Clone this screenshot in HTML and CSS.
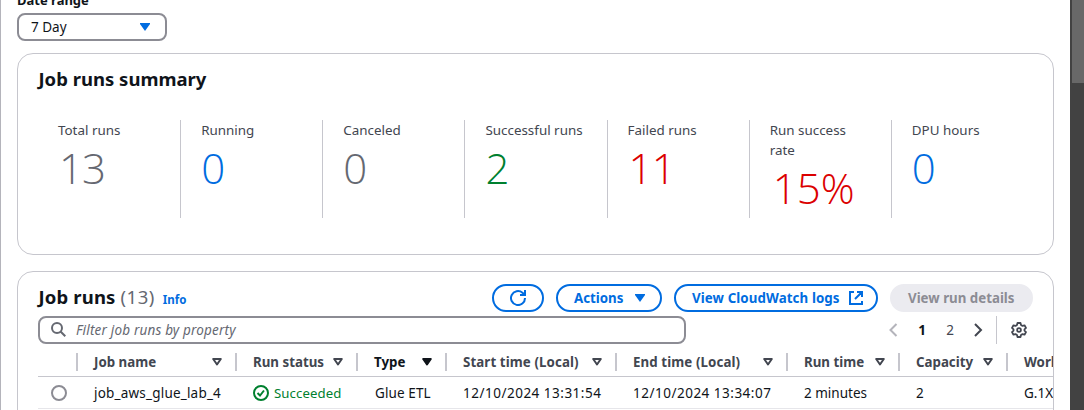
FILE: index.html
```html
<!DOCTYPE html>
<html lang="en">
<head>
<meta charset="utf-8">
<title>Job runs</title>
<link rel="stylesheet" href="styles.css">
</head>
<body>
<div class="app">
  <main class="content">
    <div class="field-label"><span>Date range</span></div>
    <div class="select"><span>7 Day</span><svg width="10" height="8" viewBox="0 0 10 8"><path d="M0 0h10v1L5 8 0 1z" fill="currentColor"/></svg></div>

    <section class="card summary">
      <h2 class="title title-summary">Job runs summary</h2>
      <div class="stats">
        <div class="stat"><div class="stat-label">Total runs</div><div class="stat-value grey multi">13</div></div>
        <div class="stat"><div class="stat-label">Running</div><div class="stat-value blue">0</div></div>
        <div class="stat"><div class="stat-label">Canceled</div><div class="stat-value grey">0</div></div>
        <div class="stat"><div class="stat-label">Successful runs</div><div class="stat-value green">2</div></div>
        <div class="stat"><div class="stat-label">Failed runs</div><div class="stat-value red multi">11</div></div>
        <div class="stat"><div class="stat-label">Run success rate</div><div class="stat-value red percent">15%</div></div>
        <div class="stat"><div class="stat-label">DPU hours</div><div class="stat-value blue">0</div></div>
      </div>
    </section>

    <section class="card runs">
      <div class="runs-header">
        <h2 class="title">Job runs</h2><span class="count">(13)</span><a class="info">Info</a>
        <div class="actions">
          <button class="btn btn-refresh"><svg width="16" height="16" viewBox="0 0 16 16" fill="none" stroke="currentColor" stroke-width="2"><path d="M15 8A7 7 0 1 1 12.500 2.700L15 5"/><path d="M15 0v5h-5"/></svg></button>
          <button class="btn btn-actions"><span>Actions</span><svg width="10" height="8" viewBox="0 0 10 8"><path d="M0 0h10v1L5 8 0 1z" fill="currentColor"/></svg></button>
          <button class="btn btn-logs"><span>View CloudWatch logs</span><svg width="14" height="14" viewBox="0 0 14 14" fill="none" stroke="currentColor" stroke-width="2"><path d="M5 1H1v12h12V10M8 1h5v5M13 1L6 8"/></svg></button>
          <button class="btn btn-disabled"><span>View run details</span></button>
        </div>
      </div>
      <div class="toolbar">
        <div class="search"><svg width="16" height="16" viewBox="0 0 16 16" fill="none" stroke="currentColor" stroke-width="2"><circle cx="6" cy="6" r="5"/><path d="M9.500 9.500L14.300 14.300"/></svg><span>Filter job runs by property</span></div>
        <div class="pager">
          <svg class="prev" width="9" height="14" viewBox="0 0 9 14" fill="none" stroke="currentColor" stroke-width="2"><path d="M7.500 1L1.500 7l6 6"/></svg>
          <span class="page current">1</span><span class="page">2</span>
          <svg class="next" width="9" height="14" viewBox="0 0 9 14" fill="none" stroke="currentColor" stroke-width="2"><path d="M1 1l6 6-6 6"/></svg>
          <span class="rule"></span>
          <svg class="gear" width="16" height="16" viewBox="0 0 16 16" fill="none" stroke="currentColor" stroke-width="1.800" stroke-linejoin="round"><path d="M6.500 1h3l.5 2 1.500.9 2-.6L15 5.900 13.500 7.300v1.400L15 10.100l-1.500 2.600-2-.6-1.500.9-.5 2h-3L6 13l-1.500-.9-2 .6L1 10.100l1.500-1.400V7.300L1 5.900l1.500-2.600 2 .6L6 3z"/><circle cx="8" cy="8" r="1.900"/></svg>
        </div>
      </div>
      <div class="table">
        <div class="row head">
          <div class="cell"></div>
          <div class="cell"><span class="h-name">Job name</span><svg class="sort" viewBox="0 0 10 8"><path d="M1.200 1h7.600L5 6.500z"/></svg></div>
          <div class="cell"><span class="h-status">Run status</span><svg class="sort" viewBox="0 0 10 8"><path d="M1.200 1h7.600L5 6.500z"/></svg></div>
          <div class="cell sorted"><span class="h-type">Type</span><svg class="sort" viewBox="0 0 10 8"><path d="M1.200 1h7.600L5 6.500z"/></svg></div>
          <div class="cell"><span class="h-start">Start time (Local)</span><svg class="sort" viewBox="0 0 10 8"><path d="M1.200 1h7.600L5 6.500z"/></svg></div>
          <div class="cell"><span class="h-end">End time (Local)</span><svg class="sort" viewBox="0 0 10 8"><path d="M1.200 1h7.600L5 6.500z"/></svg></div>
          <div class="cell"><span class="h-time">Run time</span><svg class="sort" viewBox="0 0 10 8"><path d="M1.200 1h7.600L5 6.500z"/></svg></div>
          <div class="cell"><span class="h-cap">Capacity</span><svg class="sort" viewBox="0 0 10 8"><path d="M1.200 1h7.600L5 6.500z"/></svg></div>
          <div class="cell"><span>Worker type</span></div>
        </div>
        <div class="row body">
          <div class="cell pick"><span class="radio"></span></div>
          <div class="cell"><span class="c-name">job_aws_glue_lab_4</span></div>
          <div class="cell ok"><svg width="16" height="16" viewBox="0 0 16 16" fill="none" stroke="currentColor" stroke-width="2"><circle cx="8" cy="8" r="7"/><path d="M4.500 8l2.500 2.500 4-5"/></svg><span class="c-ok">Succeeded</span></div>
          <div class="cell"><span class="c-type">Glue ETL</span></div>
          <div class="cell"><span class="c-date">12/10/2024 13:31:54</span></div>
          <div class="cell"><span class="c-date">12/10/2024 13:34:07</span></div>
          <div class="cell"><span class="c-time">2 minutes</span></div>
          <div class="cell"><span>2</span></div>
          <div class="cell"><span>G.1X</span></div>
        </div>
      </div>
    </section>
  </main>
  <div class="scrollbar"><div class="thumb"></div></div>
</div>
</body>
</html>
```
FILE: styles.css
```css
* { box-sizing: border-box; }
body { margin: 0; background: #fff; color: #0f141a; font: 13.5px/20px "Noto Sans", "Open Sans", sans-serif; overflow: hidden; }
svg { display: block; flex: none; }
.app { display: flex; width: 1084px; height: 410px; overflow: hidden; }
.content { flex: 1; min-width: 0; border-left: 1px solid #b4b4bb; padding: 0 16px; overflow: hidden; }
.scrollbar { width: 14px; background: #424242; padding-left: 2px; }
.thumb { height: 83px; background: #686868; }

.field-label { font-size: 13px; font-weight: 700; height: 13px; display: flex; align-items: flex-end; padding-bottom: 3px; }
.select { width: 150px; height: 28px; border: 2px solid #8c8c94; border-radius: 8px; display: flex; align-items: center; justify-content: space-between; padding: 0 15px 0 12px; }
.select svg { color: #006ce0; }

.card { border: 1px solid #c6c6cd; border-radius: 16px; width: 1037px; }
.summary { margin-top: 12px; height: 202px; padding: 13px 20px 0; }
.title { margin: 0; font-size: 18.5px; line-height: 24px; font-weight: 700; white-space: nowrap; }
.title-summary { padding-left: 0.5px; }
.stats { display: grid; grid-template-columns: repeat(7, 1fr); margin-top: 29px; height: 98px; }
.stat { border-left: 1px solid #c6c6cd; padding: 0 20px; }
.stat:first-child { border-left: 0; }
.stat-label { color: #424650; font-size: 13.4px; }
.stat-value { font: 340 42px/56px "Open Sans", "Noto Sans", sans-serif; }
.multi { padding-left: 1px; letter-spacing: -0.9px; }
.percent { padding-left: 3px; }
.grey { color: #656871; }
.blue { color: #006ce0; }
.green { color: #00802f; }
.red { color: #db0000; }

.runs { margin-top: 16px; height: 180px; overflow: hidden; padding: 12px 0 0 20px; }
.runs-header { display: flex; height: 28px; padding-right: 20px; }
.runs-header .title, .count { line-height: 26px; }
.runs-header .title { padding-left: 0.5px; letter-spacing: 0.15px; }
.count { font-size: 18.5px; color: #656871; margin-left: 5px; letter-spacing: 0.5px; }
.info { font-size: 11.5px; font-weight: 700; color: #006ce0; line-height: 32px; margin-left: 8px; }
.actions { display: flex; gap: 12px; margin-left: auto; }
.btn { height: 28px; border: 2px solid #006ce0; border-radius: 14px; background: #fff; color: #006ce0; font: 700 13.3px/20px "Noto Sans", sans-serif; display: flex; align-items: center; justify-content: space-between; padding: 0 15px 0 16px; white-space: nowrap; }
.btn-refresh { width: 52px; justify-content: center; padding: 0 16px; }
.btn-actions { width: 106px; }
.btn-logs { width: 204px; padding-right: 13px; letter-spacing: 0.1px; }
.btn-disabled { width: 143px; background: #ebebf0; border-color: #ebebf0; color: #8c8c94; }
.toolbar { display: flex; margin-top: 4px; height: 28px; padding-right: 20px; }
.search { width: 648px; border: 2px solid #8c8c94; border-radius: 8px; display: flex; align-items: center; gap: 9px; padding-left: 11px; color: #656871; font-style: italic; letter-spacing: 0.18px; }
.pager { display: flex; align-items: center; margin-left: auto; width: 144px; color: #424650; }
.page { width: 28px; text-align: center; }
.current { font-weight: 700; color: #0f141a; }
.prev { color: #b4b4bb; margin-right: 10px; }
.next { margin-left: 10px; }
.rule { width: 1px; height: 28px; background: #c6c6cd; margin-left: 13px; }
.gear { margin-left: 14px; }

.table { width: 1100px; }
.row { display: grid; grid-template-columns: 40px 159px 121px 89px 170px 171px 112px 108px 130px; }
.cell { display: flex; align-items: center; padding: 0 15px 0 16px; white-space: nowrap; }
.head { height: 33px; padding-top: 4px; border-bottom: 1px solid #c6c6cd; font-weight: 700; color: #424650; font-size: 13.3px; }
.head .cell { justify-content: space-between; position: relative; }
.head .cell::after { content: ""; position: absolute; right: 0; top: 5px; width: 2px; height: 18px; background: #c6c6cd; }
.head .cell:last-child::after { display: none; }
.h-start, .h-end { letter-spacing: 0.1px; }
.sort { width: 10px; height: 8px; fill: none; stroke: currentColor; stroke-width: 2; stroke-linejoin: round; }
.sorted { color: #0f141a; }
.sorted .sort { fill: currentColor; }
.body { height: 32px; border-bottom: 1px solid #e6e6ea; }
.pick { padding: 0 0 0 13px; }
.radio { width: 16px; height: 16px; border: 2px solid #8c8c94; border-radius: 50%; }
.ok { color: #00802f; gap: 5px; }
.c-name { letter-spacing: 0.2px; }
.c-ok { font-size: 13.2px; letter-spacing: 0.1px; }
.c-type { padding-left: 1px; letter-spacing: 0.1px; }
.c-date { letter-spacing: 0.5px; }
```
